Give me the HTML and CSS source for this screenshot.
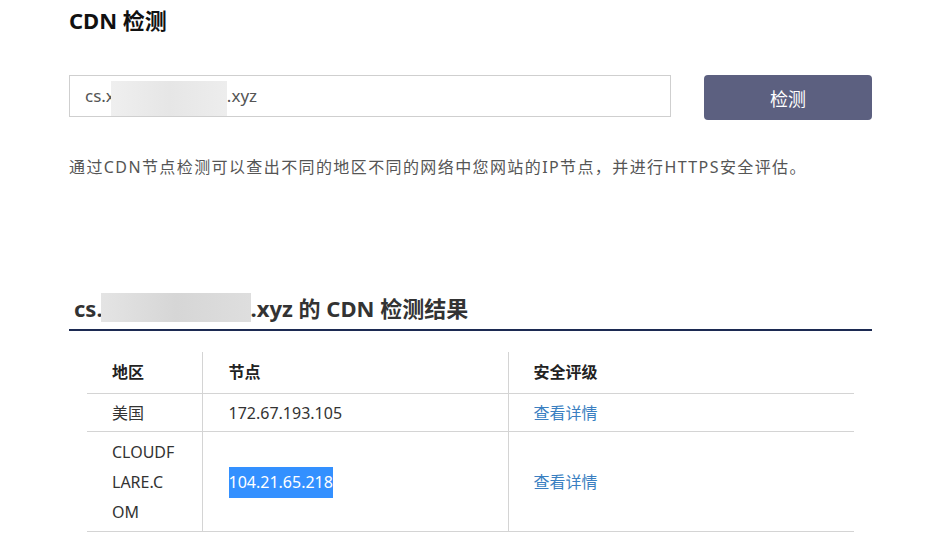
FILE: index.html
```html
<!DOCTYPE html>
<html lang="zh-CN">
<head>
<meta charset="utf-8">
<title>CDN 检测</title>
<link rel="stylesheet" href="styles.css">
</head>
<body>
<div class="page">
  <h1 class="title">CDN 检测</h1>
  <div class="search">
    <div class="input">cs.x<span class="blur blur-input"></span>.xyz</div>
    <button class="btn">检测</button>
  </div>
  <p class="desc">通过CDN节点检测可以查出不同的地区不同的网络中您网站的IP节点，并进行HTTPS安全评估。</p>

  <h2 class="result-title">cs.<span class="blur blur-head"></span>.xyz 的 CDN 检测结果</h2>
  <table class="result">
    <thead>
      <tr><th class="c1">地区</th><th class="c2">节点</th><th class="c3">安全评级</th></tr>
    </thead>
    <tbody>
      <tr class="r1"><td class="c1">美国</td><td class="c2">172.67.193.105</td><td class="c3"><a class="link">查看详情</a></td></tr>
      <tr class="r2"><td class="c1 wrap">CLOUDF<wbr>LARE.C<wbr>OM</td><td class="c2"><span class="sel">104.21.65.218</span></td><td class="c3"><a class="link">查看详情</a></td></tr>
    </tbody>
  </table>
</div>
</body>
</html>
```
FILE: styles.css
```css
* { box-sizing: border-box; }
body {
  margin: 0;
  background: #fff;
  font-family: "Noto Sans", "Noto Sans CJK SC", sans-serif;
  color: #333;
}
.page {
  width: 935px;
  padding: 0 0 0 69px;
}
.title {
  margin: 0;
  padding-top: 5px;
  font-size: 22px;
  line-height: 30px;
  font-weight: bold;
  color: #111;
}
.search {
  display: flex;
  align-items: flex-start;
  gap: 33px;
  margin-top: 40px;
  width: 803px;
}
.input {
  width: 602px;
  height: 42px;
  border: 1px solid #cfcfcf;
  padding-left: 15px;
  font-size: 17px;
  line-height: 40px;
  color: #555;
  white-space: nowrap;
}
.blur {
  display: inline-block;
  vertical-align: top;
}
.blur-input {
  width: 116px;
  height: 35px;
  margin-left: -4px;
  margin-top: 5px;
  background: linear-gradient(90deg, #efefef, #e6e6e6 50%, #ededed);
}
.btn {
  width: 168px;
  height: 45px;
  border: none;
  border-radius: 4px;
  background: #5c6080;
  color: #fff;
  font-family: inherit;
  font-size: 18px;
  padding: 0;
}
.desc {
  margin: 35px 0 0;
  font-size: 16px;
  line-height: 24px;
  color: #555;
  letter-spacing: 1.4px;
}
.result-title {
  margin: 113px 0 0;
  padding-left: 5px;
  width: 803px;
  font-size: 22px;
  line-height: 32px;
  font-weight: bold;
  color: #333;
  border-bottom: 2px solid #1c2a52;
  padding-bottom: 5px;
}
.blur-head {
  width: 150px;
  height: 29px;
  margin-left: -2px;
  margin-top: 1px;
  background: linear-gradient(90deg, #e4e4e4, #d6d6d6 50%, #dedede);
}
.result {
  margin: 21px 0 0 18px;
  border-collapse: collapse;
  width: 767px;
  table-layout: fixed;
  font-size: 16px;
}
.result th, .result td {
  text-align: left;
  padding: 4px 25px 3px;
  line-height: 30px;
  border-bottom: 1px solid #d4d4d4;
  vertical-align: middle;
}
.result th {
  font-weight: bold;
  color: #222;
  padding-top: 5px;
  padding-bottom: 6px;
}
.c1 { width: 115px; }
.c2 { width: 306px; border-left: 1px solid #d4d4d4; border-right: 1px solid #d4d4d4; }
.result th.c2, .result td.c2 { padding-left: 26px; }
.result td.c1.wrap { padding: 5px 22px 4px 25px; }
.result tbody td { color: #333; }
.link {
  color: #3a7fc1;
  cursor: pointer;
}
.sel {
  background: #3390ff;
  color: #fff;
  display: inline-block;
  line-height: 31px;
}
```
